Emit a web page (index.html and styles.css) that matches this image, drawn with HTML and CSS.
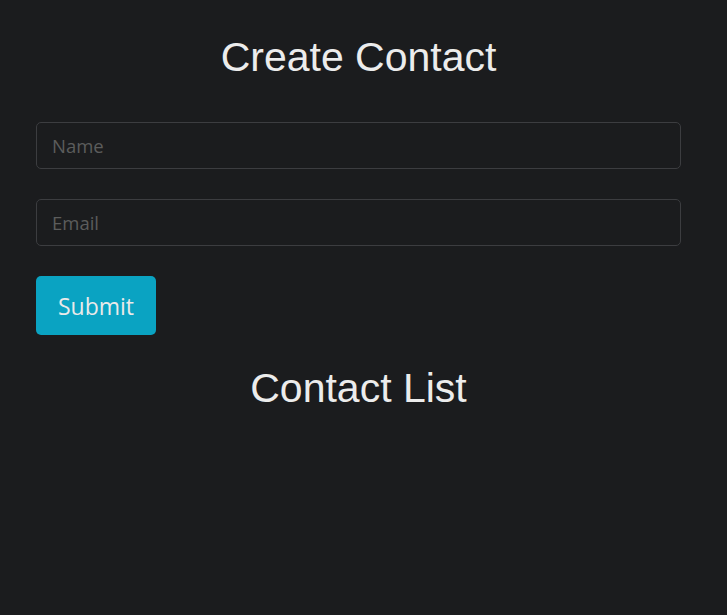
FILE: index.html
```html
<!DOCTYPE html>
<html>
<head>
<meta charset="utf-8">
<link rel="stylesheet" href="styles.css">
</head>
<body>
<div class="page">
  <h1 class="title">Create Contact</h1>
  <form class="form">
    <input class="field" type="text" placeholder="Name">
    <input class="field" type="email" placeholder="Email">
    <div><button class="submit" type="button">Submit</button></div>
  </form>
  <h1 class="title list-title">Contact List</h1>
</div>
</body>
</html>
```
FILE: styles.css
```css
html, body {
  margin: 0;
  padding: 0;
  background: #1b1c1e;
  height: 100%;
}
.page {
  padding: 0 46px 0 36px;
}
.title {
  margin: 0;
  padding-top: 34px;
  font-family: "Liberation Sans", Arial, sans-serif;
  font-weight: 400;
  font-size: 41px;
  line-height: 46px;
  color: #ececec;
  text-align: center;
}
.form {
  display: flex;
  flex-direction: column;
  gap: 30px;
  margin-top: 42px;
}
.field {
  box-sizing: border-box;
  display: block;
  width: 100%;
  height: 47px;
  padding: 0 15px;
  background: #1b1c1e;
  border: 1px solid #3c3d40;
  border-radius: 5px;
  font-family: "Open Sans", "Noto Sans", sans-serif;
  font-size: 18.5px;
  color: #d0d0d0;
  outline: none;
}
.field::placeholder {
  color: #5c5c5c;
}
.submit {
  width: 120px;
  height: 59px;
  background: #0aa3c2;
  border: none;
  border-radius: 5px;
  color: #eaeaea;
  font-family: "Open Sans", "Noto Sans", sans-serif;
  font-size: 23px;
  padding: 0;
}
.list-title {
  padding-top: 30px;
}
```
